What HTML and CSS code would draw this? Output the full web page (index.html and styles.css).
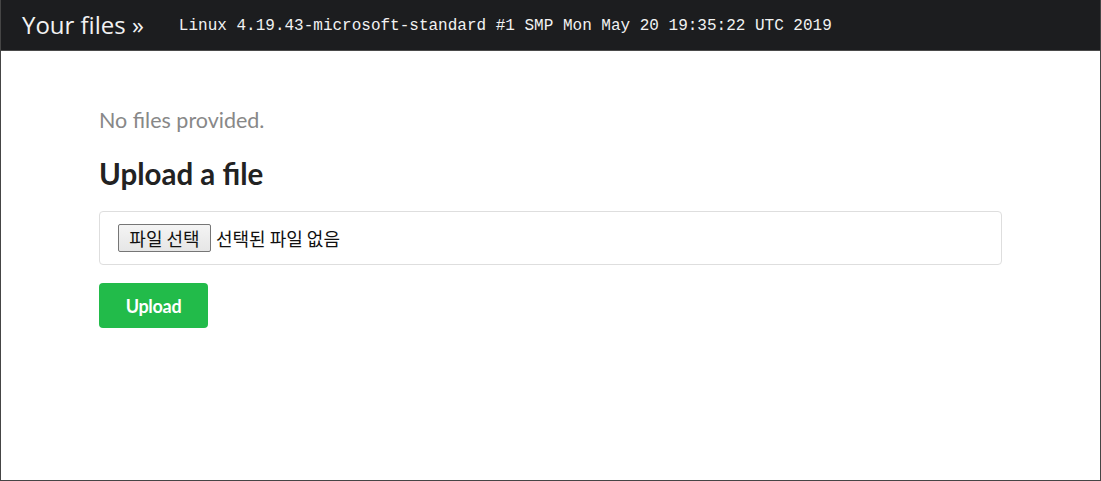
FILE: index.html
```html
<!DOCTYPE html>
<html lang="en">
<head>
<meta charset="utf-8">
<title>Your files</title>
<link rel="stylesheet" href="styles.css">
</head>
<body>
<div class="window">
  <header class="navbar">
    <span class="brand">Your files »</span>
    <span class="uname">Linux 4.19.43-microsoft-standard #1 SMP Mon May 20 19:35:22 UTC 2019</span>
  </header>
  <main class="content">
    <p class="empty">No files provided.</p>
    <h2 class="title">Upload a file</h2>
    <form class="upload">
      <div class="filebox">
        <span class="filebtn">파일 선택</span>
        <span class="filename">선택된 파일 없음</span>
      </div>
      <button type="button" class="submit">Upload</button>
    </form>
  </main>
</div>
</body>
</html>
```
FILE: styles.css
```css
html, body {
  margin: 0;
  padding: 0;
  background: #fff;
}
.window {
  box-sizing: border-box;
  width: 1101px;
  height: 481px;
  border: 1px solid #454545;
  border-top: none;
  display: flex;
  flex-direction: column;
  font-family: Lato, "Noto Sans", sans-serif;
}
.navbar {
  height: 50px;
  background: #1c1d1f;
  border-bottom: 1px solid #4a4a4a;
  display: flex;
  align-items: center;
  padding-left: 21px;
  flex-shrink: 0;
}
.brand {
  font-family: "Open Sans", "Noto Sans", sans-serif;
  font-size: 24px;
  color: #f2f2f2;
  letter-spacing: 0;
  margin-right: 35px;
  padding-bottom: 2px;
}
.uname {
  font-family: "Liberation Mono", "DejaVu Sans Mono", monospace;
  font-size: 16px;
  color: #f2f2f2;
  padding-top: 2px;
}
.content {
  padding: 54px 0 0 98px;
  width: 903px;
}
.empty {
  margin: 0;
  font-size: 21.5px;
  color: #888;
  line-height: 30px;
}
.title {
  margin: 21px 0 0;
  font-size: 29.5px;
  font-weight: 700;
  color: #222;
  line-height: 36px;
}
.upload {
  margin-top: 19px;
  display: flex;
  flex-direction: column;
  align-items: flex-start;
}
.filebox {
  box-sizing: border-box;
  width: 903px;
  height: 54px;
  border: 1px solid #dedede;
  border-radius: 4px;
  display: flex;
  align-items: center;
  padding-left: 18px;
  font-family: "Noto Sans CJK KR", sans-serif;
  font-size: 18px;
  color: #111;
}
.filebtn {
  box-sizing: border-box;
  height: 28px;
  width: 93px;
  display: flex;
  align-items: center;
  justify-content: center;
  border: 1px solid #767676;
  border-radius: 2px;
  margin-right: 5px;
  background: linear-gradient(#f4f4f4, #e6e6e6);
}
.submit {
  margin-top: 18px;
  width: 109px;
  height: 45px;
  border: none;
  border-radius: 4px;
  background: #22bb4a;
  color: #fff;
  font-family: Lato, sans-serif;
  font-weight: 700;
  font-size: 18px;
  letter-spacing: -0.3px;
}
```
